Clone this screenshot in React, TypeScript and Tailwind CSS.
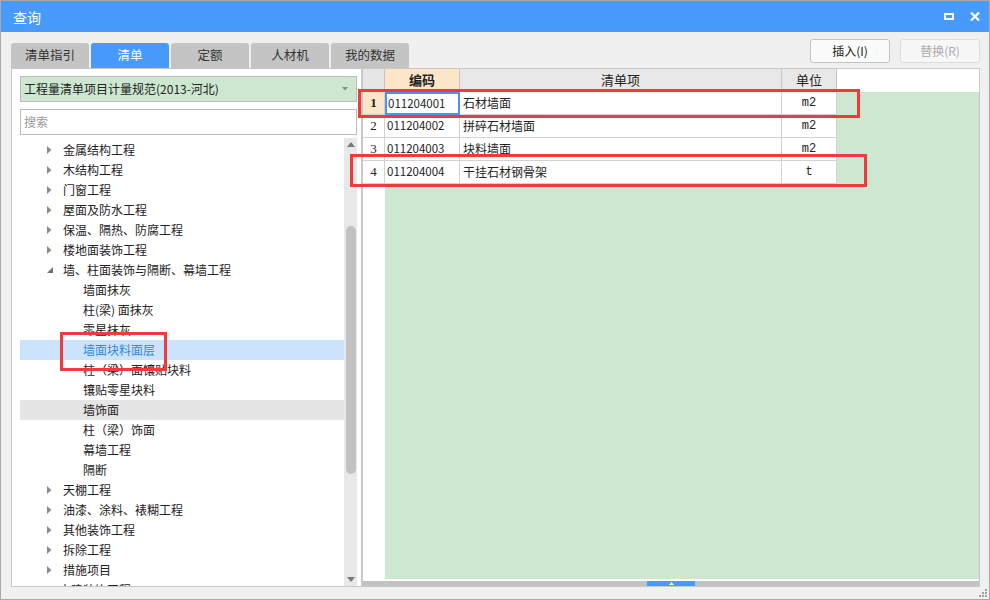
import React from "react";

type TreeItem = { label: string; level: 0 | 1; arrow?: "right" | "down"; state?: "selected" | "hover" };

const tree: TreeItem[] = [
  { label: "金属结构工程", level: 0, arrow: "right" },
  { label: "木结构工程", level: 0, arrow: "right" },
  { label: "门窗工程", level: 0, arrow: "right" },
  { label: "屋面及防水工程", level: 0, arrow: "right" },
  { label: "保温、隔热、防腐工程", level: 0, arrow: "right" },
  { label: "楼地面装饰工程", level: 0, arrow: "right" },
  { label: "墙、柱面装饰与隔断、幕墙工程", level: 0, arrow: "down" },
  { label: "墙面抹灰", level: 1 },
  { label: "柱(梁) 面抹灰", level: 1 },
  { label: "零星抹灰", level: 1 },
  { label: "墙面块料面层", level: 1, state: "selected" },
  { label: "柱（梁）面镶贴块料", level: 1 },
  { label: "镶贴零星块料", level: 1 },
  { label: "墙饰面", level: 1, state: "hover" },
  { label: "柱（梁）饰面", level: 1 },
  { label: "幕墙工程", level: 1 },
  { label: "隔断", level: 1 },
  { label: "天棚工程", level: 0, arrow: "right" },
  { label: "油漆、涂料、裱糊工程", level: 0, arrow: "right" },
  { label: "其他装饰工程", level: 0, arrow: "right" },
  { label: "拆除工程", level: 0, arrow: "right" },
  { label: "措施项目", level: 0, arrow: "right" },
];

const rows = [
  { n: "1", code: "011204001", name: "石材墙面", unit: "m2" },
  { n: "2", code: "011204002", name: "拼碎石材墙面", unit: "m2" },
  { n: "3", code: "011204003", name: "块料墙面", unit: "m2" },
  { n: "4", code: "011204004", name: "干挂石材钢骨架", unit: "t" },
];

function ArrowRight() {
  return (
    <svg width="5" height="8" viewBox="0 0 5 8">
      <polygon points="0,0 4.5,4 0,8" fill="#8c8c8c" />
    </svg>
  );
}
function ArrowDown() {
  return (
    <svg width="6" height="6" viewBox="0 0 6 6">
      <polygon points="6,0 6,6 0,6" fill="#707070" />
    </svg>
  );
}

export default function App() {
  return (
    <div className="relative w-[990px] h-[600px] flex flex-col border border-[#a9a9a9] bg-[#f0f0f0] overflow-hidden font-['Noto_Sans_CJK_SC','Noto_Sans',sans-serif] text-[#222]">
      {/* Title bar */}
      <div className="h-[31px] shrink-0 bg-[#469bfc] flex items-center pl-[12px] pr-[9px] text-white">
        <div className="text-[14px] leading-none">查询</div>
        <div className="flex-1" />
        <div className="w-[10px] h-[7px] border-2 border-white mr-[16px]" />
        <svg width="10" height="9" viewBox="0 0 10 9">
          <path d="M1 0.5 L9 8.5 M9 0.5 L1 8.5" stroke="#fff" strokeWidth="2.2" />
        </svg>
      </div>

      {/* Toolbar */}
      <div className="h-[36px] shrink-0 flex items-end pl-[10px] pr-[9px]">
        <div className="flex gap-[2px]">
          {["清单指引", "清单", "定额", "人材机", "我的数据"].map((t) => (
            <div
              key={t}
              className={
                t === "清单"
                  ? "w-[78px] h-[25px] rounded-t-[3px] bg-[#469bfc] text-white text-[12.5px] flex items-center justify-center"
                  : "w-[78px] h-[25px] rounded-t-[3px] bg-[#c4c4c4] text-[#333] text-[12.5px] flex items-center justify-center"
              }
            >
              {t}
            </div>
          ))}
        </div>
        <div className="flex-1" />
        <div className="self-start mt-[7px] flex gap-[10px]">
          <div className="w-[80px] h-[24px] rounded-[3px] border border-[#c4c4c4] bg-[#fbfbfb] text-[12px] flex items-center justify-center text-[#222]">
            插入(I)
          </div>
          <div className="w-[80px] h-[24px] rounded-[3px] border border-[#dcdcdc] bg-[#f7f7f7] text-[12px] flex items-center justify-center text-[#ababab]">
            替换(R)
          </div>
        </div>
      </div>

      {/* Panels */}
      <div className="flex-1 min-h-0 flex pl-[10px] pr-[9px] pb-[12px]">
        {/* Left panel */}
        <div className="w-[351px] min-h-0 border border-[#c8c8c8] bg-white flex flex-col pl-[8px] pr-[4px] pt-[7px]">
          <div className="h-[26px] shrink-0 border border-[#bdbdbd] bg-[#cde7d1] flex items-center pl-[3px] pr-[8px] text-[12px]">
            <span className="flex-1">工程量清单项目计量规范(2013-河北)</span>
            <svg width="6" height="4" viewBox="0 0 6 4">
              <polygon points="0,0 6,0 3,3.5" fill="#8a8a8a" />
            </svg>
          </div>
          <div className="h-[26px] shrink-0 mt-[7px] border border-[#bdbdbd] bg-white flex items-center pl-[3px] text-[12px] text-[#9a9a9a]">
            搜索
          </div>
          <div className="flex-1 mt-[3px] flex overflow-hidden min-h-0">
            <div className="flex-1 flex flex-col overflow-hidden pt-[2px]">
              {tree.map((it, i) => (
                <div
                  key={i}
                  className={
                    "h-[20px] shrink-0 flex items-center text-[12px] " +
                    (it.state === "selected"
                      ? "bg-[#cce4fb] text-[#2e86e8]"
                      : it.state === "hover"
                      ? "bg-[#e5e5e5]"
                      : "")
                  }
                >
                  {it.level === 0 ? (
                    <>
                      <div className="w-[43px] shrink-0 pl-[27px] flex items-center">
                        {it.arrow === "down" ? <ArrowDown /> : <ArrowRight />}
                      </div>
                      <span className="whitespace-nowrap">{it.label}</span>
                    </>
                  ) : (
                    <span className="pl-[63px] whitespace-nowrap">{it.label}</span>
                  )}
                </div>
              ))}
              <div className="h-[20px] shrink-0 flex items-center text-[12px]">
                <div className="w-[39px] shrink-0 pl-[22px] flex items-center">
                  <svg width="7" height="5" viewBox="0 0 7 5">
                    <path d="M0.5 0.5 L3.5 4 L6.5 0.5" stroke="#777" fill="none" />
                  </svg>
                </div>
                <span className="whitespace-nowrap">土建装饰工程</span>
              </div>
            </div>
            <div className="w-[13px] bg-[#e8e8e8] flex flex-col items-center">
              <svg className="mt-[4px] shrink-0" width="8" height="5" viewBox="0 0 8 5">
                <polygon points="0,5 8,5 4,0" fill="#7a7a7a" />
              </svg>
              <div className="mt-[79px] w-[10px] h-[248px] shrink-0 rounded-full bg-[#c2c2c2]" />
              <div className="flex-1" />
              <svg className="mb-[4px] shrink-0" width="8" height="5" viewBox="0 0 8 5">
                <polygon points="0,0 8,0 4,5" fill="#7a7a7a" />
              </svg>
            </div>
          </div>
        </div>

        {/* Right panel */}
        <div className="flex-1 min-h-0 border border-[#c8c8c8] bg-white flex flex-col">
          {/* header */}
          <div className="h-[23px] flex shrink-0">
            <div className="w-[22px] bg-[#e6e6e6] border-r border-b border-[#c6c6c6]" />
            <div className="w-[75px] bg-[#fde6c8] border-r border-b border-[#c6c6c6] flex items-center justify-center text-[13px] font-bold">
              编码
            </div>
            <div className="w-[322px] bg-[#e8e8e8] border-r border-b border-[#c6c6c6] flex items-center justify-center text-[13px]">
              清单项
            </div>
            <div className="w-[55px] bg-[#e8e8e8] border-r border-b border-[#c6c6c6] flex items-center justify-center text-[13px]">
              单位
            </div>
            <div className="flex-1 bg-white" />
          </div>
          {/* body */}
          <div className="flex-1 flex min-h-0">
            <div className="w-[22px] bg-white flex flex-col">
              {rows.map((r, i) => (
                <div
                  key={r.n}
                  className={
                    "h-[23px] shrink-0 border-r border-b border-[#d2d2d2] flex items-center justify-center text-[13px] font-['Liberation_Serif',serif] " +
                    (i === 0 ? "bg-[#fde6c8] font-bold" : "bg-white")
                  }
                >
                  {r.n}
                </div>
              ))}
            </div>
            <div className="flex-1 bg-[#cde7d1] flex flex-col">
              {rows.map((r, i) => (
                <div key={r.n} className="h-[23px] shrink-0 w-[452px] flex bg-white">
                  <div
                    className={
                      "w-[75px] flex items-center text-[11.5px] " +
                      (i === 0 ? "border-2 border-[#4a95ee] pl-[1px]" : "border-r border-b border-[#d2d2d2] pl-[2px]")
                    }
                  >
                    {r.code}
                  </div>
                  <div className="w-[322px] border-r border-b border-[#d2d2d2] flex items-center pl-[3px] text-[12px]">
                    {r.name}
                  </div>
                  <div className="w-[55px] border-r border-b border-[#d2d2d2] flex items-center justify-center text-[12px] font-['Liberation_Mono',monospace]">
                    {r.unit}
                  </div>
                </div>
              ))}
            </div>
          </div>
          <div className="h-[2px] bg-white shrink-0" />
          <div className="h-[5px] bg-[#c2c2c2] flex justify-center shrink-0">
            <div className="w-[48px] h-full bg-[#469bfc] flex items-center justify-center">
              <svg width="5" height="3" viewBox="0 0 5 3">
                <polygon points="0,3 5,3 2.5,0" fill="#fff" />
              </svg>
            </div>
          </div>
        </div>
      </div>

      {/* resize grip */}
      <svg className="absolute right-[2px] bottom-[2px]" width="8" height="8" viewBox="0 0 8 8">
        <rect x="6" y="0" width="2" height="2" fill="#a0a0a0" />
        <rect x="3" y="3" width="2" height="2" fill="#a0a0a0" />
        <rect x="6" y="3" width="2" height="2" fill="#a0a0a0" />
        <rect x="0" y="6" width="2" height="2" fill="#a0a0a0" />
        <rect x="3" y="6" width="2" height="2" fill="#a0a0a0" />
        <rect x="6" y="6" width="2" height="2" fill="#a0a0a0" />
      </svg>

      {/* red annotation boxes */}
      <div className="absolute left-[59px] top-[331px] w-[107px] h-[39px] border-[3px] border-[#ef3b3b]" />
      <div className="absolute left-[357px] top-[88px] w-[502px] h-[29px] border-[3px] border-[#ef3b3b]" />
      <div className="absolute left-[349px] top-[153px] w-[517px] h-[33px] border-[3px] border-[#ef3b3b]" />
    </div>
  );
}
